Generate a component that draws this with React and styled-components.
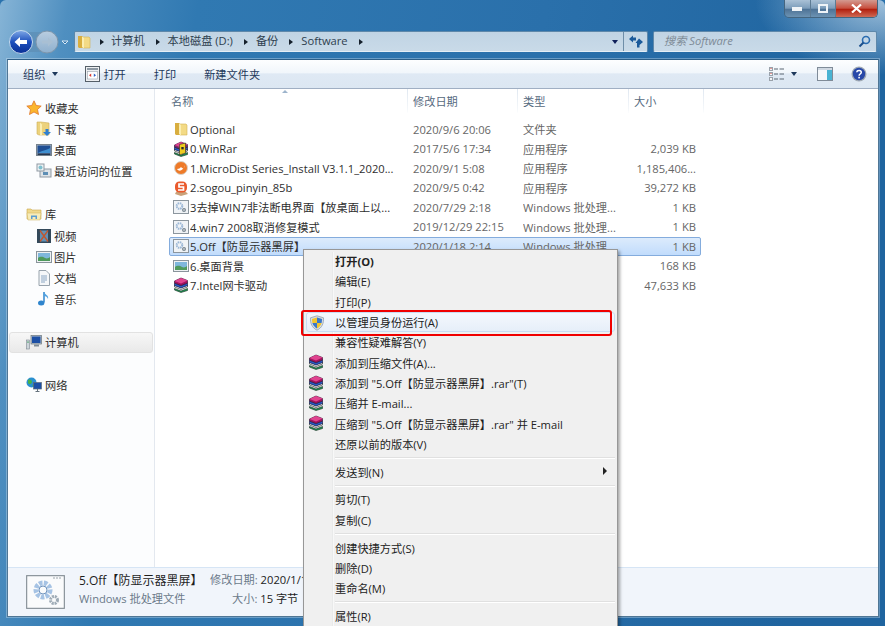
import React from 'react';
import styled, { createGlobalStyle } from 'styled-components';

const GlobalStyle = createGlobalStyle`
    html, body { margin: 0; padding: 0; background: #2a72ad; }
    body { font-family: "Open Sans", "Noto Sans CJK SC", sans-serif; font-size: 11.2px; overflow: hidden; }
    * { box-sizing: border-box; }
`

const Window = styled.div`
    position: relative;
    width: 885px;
    height: 626px;
    overflow: hidden;
    display: flex;
    flex-direction: column;
    padding: 0 6px 9px 6px;
    border-radius: 6px 6px 0 0;
    background:
        radial-gradient(ellipse 130px 75px at 885px 0, rgba(195, 218, 236, .8), rgba(195, 218, 236, 0)),
        linear-gradient(100deg, #86b4d6 0, #4f8fc0 7%, #3079b2 20%, #2a70ab 55%, #1f649f 90%);
`
const TitleBar = styled.div`
    height: 31px;
    display: flex;
    justify-content: flex-end;
    padding-right: 1px;
`
const Controls = styled.div`
    width: 94px;
    height: 18px;
    display: flex;
    border: 1px solid #44657f;
    border-top: 0;
    border-radius: 0 0 5px 5px;
    overflow: hidden;
`
const CtrlButton = styled.div`
    flex: ${props => props.$wide ? 1.65 : 1};
    display: flex;
    align-items: center;
    justify-content: center;
    border-right: 1px solid #5d7b94;
    background: ${props => props.$close
        ? 'linear-gradient(#d39a90, #c8503f 48%, #b2200f 55%, #cf6a55)'
        : 'linear-gradient(#a9c1d6, #7c9dbb 48%, #4e7396 55%, #6d93b3)'};
    &:last-child { border-right: 0; }
`
const NavBar = styled.div`
    height: 28px;
    display: flex;
    align-items: flex-start;
    padding-left: 3px;
`
const NavButtons = styled.div`
    width: 65px;
    height: 24px;
    flex: none;
    margin-top: -2px;
`
const AddressBox = styled.div`
    width: 574px;
    height: 21px;
    flex: none;
    display: flex;
    align-items: center;
    background: linear-gradient(#c0d4e4, #c9dae8);
    border: 1px solid #5e88aa;
    border-bottom-color: #e4eef5;
    border-radius: 2px;
    color: #2d3e4e;
    padding-left: 1px;
`
const Crumb = styled.span`
    margin: 0 11px 0 ${props => props.$first ? 7 : 8}px;
    padding-bottom: 3px;
    white-space: nowrap;
`
const CrumbArrow = styled.span`
    width: 0;
    height: 0;
    flex: none;
    margin-left: ${props => props.$first ? '8px' : '0'};
    border-left: 4px solid #15202b;
    border-top: 3.5px solid transparent;
    border-bottom: 3.5px solid transparent;
`
const AddressEnd = styled.div`
    margin-left: auto;
    height: 100%;
    display: flex;
    align-items: center;
`
const DropCaret = styled.span`
    width: 0;
    height: 0;
    margin: 0 ${props => props.$margin || 4}px 0 ${props => props.$margin || 4}px;
    border-top: 4px solid ${props => props.$color || '#10205a'};
    border-left: 3.5px solid transparent;
    border-right: 3.5px solid transparent;
`
const RefreshBox = styled.div`
    width: 24px;
    height: 100%;
    display: flex;
    align-items: center;
    justify-content: center;
    border-left: 1px solid #6f8ea8;
`
const SearchBox = styled.div`
    width: 224px;
    height: 21px;
    flex: none;
    margin-left: 5px;
    display: flex;
    align-items: center;
    justify-content: space-between;
    padding: 0 5px 0 10px;
    background: linear-gradient(#c0d4e4, #c9dae8);
    border: 1px solid #5e88aa;
    border-bottom-color: #e4eef5;
    border-radius: 2px;
    color: #7e8b96;
    font-style: italic;
`
const SearchText = styled.span`
    padding-bottom: 3px;
`
const Body = styled.div`
    flex: 1;
    min-height: 0;
    display: flex;
    flex-direction: column;
    background: #fff;
    border: 1px solid #4f7695;
    border-top-color: #2d5f88;
    margin: 0 0 0 1px;
    box-shadow: 0 0 0 1px rgba(220, 235, 245, .35);
`
const Toolbar = styled.div`
    height: 29px;
    flex: none;
    display: flex;
    align-items: center;
    padding: 0 11px 0 15px;
    color: #1e395b;
    background: linear-gradient(#fdfeff 0, #f1f6fb 45%, #dfe9f4 50%, #dce7f2 100%);
    border-bottom: 1px solid #a0afc3;
`
const ToolItem = styled.div`
    display: flex;
    align-items: center;
    gap: 3px;
    margin-left: ${props => props.$left || 0}px;
    padding-bottom: 1px;
    white-space: nowrap;
`
const ToolRight = styled.div`
    margin-left: auto;
    display: flex;
    align-items: center;
`
const Content = styled.div`
    flex: 1;
    min-height: 0;
    display: flex;
`
const Sidebar = styled.div`
    width: 147px;
    flex: none;
    padding: 8px 0 0 1px;
    border-right: 1px solid #e3e8ef;
    background: #fcfdfe;
`
const NavGroup = styled.div`
    margin-bottom: 22px;
`
const NavRow = styled.div`
    height: 21.2px;
    display: flex;
    align-items: center;
    gap: ${props => props.$child ? 2 : 3}px;
    color: #2b2b2b;
    padding-left: ${props => props.$child ? 27 : 17}px;
    ${props => props.$active && `
        margin-right: 1px;
        border: 1px solid #e2e2e2;
        border-radius: 3px;
        padding-left: 16px;
        background: linear-gradient(#f7f7f7, #e9e9e9);
    `}
`
const FileArea = styled.div`
    flex: 1;
    min-width: 0;
    background: #fff;
`
const HeaderRow = styled.div`
    height: 24px;
    display: grid;
    grid-template-columns: 253px 110px 111px 75px;
    position: relative;
    color: #566a80;
`
const HeaderCell = styled.div`
    display: flex;
    align-items: center;
    padding-left: ${props => props.$pad || 5}px;
    padding-bottom: 1px;
    border-right: 1px solid;
    border-image: linear-gradient(#dfe7f0, #f4f7fa 80%, #fff) 1;
`
const SortMark = styled.span`
    position: absolute;
    left: 127px;
    top: 1px;
    width: 0;
    height: 0;
    border-bottom: 3px solid #9db4cc;
    border-left: 3px solid transparent;
    border-right: 3px solid transparent;
`
const FileList = styled.div`
    padding: 6.5px 0 0 14px;
    width: 546px;
`
const FileRow = styled.div`
    height: 19.5px;
    display: grid;
    grid-template-columns: 17px 223px 110px 97px 1fr;
    align-items: center;
    padding: 0 4px 0 3px;
    color: #666;
    border: 1px solid transparent;
    border-radius: 2px;
    ${props => props.$selected && `
        border-color: #84acdd;
        background: linear-gradient(#dcebfc, #c1dcfc);
    `}
`
const FileIcon = styled.div`
    display: flex;
    height: 16px;
`
const FileName = styled.div`
    color: #2e2e2e;
    white-space: nowrap;
    overflow: hidden;
`
const FileCell = styled.div`
    white-space: nowrap;
    overflow: hidden;
    text-align: ${props => props.$right ? 'right' : 'left'};
`
const Details = styled.div`
    height: 49px;
    flex: none;
    display: flex;
    align-items: flex-start;
    padding: 7px 0 0 18px;
    background: #f1f5fb;
    border-top: 1px solid #d6e5f5;
`
const DetailText = styled.div`
    margin: -4px 0 0 14px;
    display: grid;
    grid-template-columns: 131px auto;
    row-gap: 1px;
    color: #666;
    white-space: nowrap;
`
const DetailName = styled.div`
    color: #1e1e1e;
    font-size: 12px;
`
const DetailMeta = styled.div`
    padding-left: ${props => props.$pad || 0}px;
    color: #6b7a8a;
    & > b { font-weight: 400; color: #222; }
`
const Menu = styled.div`
    position: absolute;
    left: 303px;
    top: 249px;
    width: 315px;
    height: 400px;
    padding: 1px 2px 2px;
    background: #f0f0f0;
    border: 1px solid #979797;
    box-shadow: 2px 2px 3px rgba(0, 0, 0, .35);
    color: #222;
    &::before {
        content: "";
        position: absolute;
        left: 28px;
        top: 2px;
        bottom: 0;
        width: 2px;
        background: linear-gradient(90deg, #e2e3e3, #fff);
    }
`
const MenuRow = styled.div`
    position: relative;
    height: 20.3px;
    display: flex;
    align-items: center;
    padding-left: 29px;
    font-weight: ${props => props.$bold ? 700 : 400};
    white-space: nowrap;
    ${props => props.$hot && `
        border: 1px solid #c9dcf2;
        border-radius: 3px;
        padding-left: 28px;
        background: linear-gradient(#f4f8fd, #e6eff9);
    `}
`
const MenuIcon = styled.span`
    position: absolute;
    left: 2px;
    top: 2px;
    width: 16px;
    height: 16px;
    display: flex;
`
const MenuArrow = styled.span`
    position: absolute;
    right: 8px;
    top: 6px;
    width: 0;
    height: 0;
    border-left: 4px solid #222;
    border-top: 4px solid transparent;
    border-bottom: 4px solid transparent;
`
const MenuSep = styled.div`
    height: 7.5px;
    margin-left: 29px;
    display: flex;
    align-items: center;
    &::after {
        content: "";
        width: 100%;
        height: 2px;
        background: linear-gradient(#e0e0e0 50%, #fff 50%);
    }
`
const RedMark = styled.div`
    position: absolute;
    left: -3px;
    top: 60px;
    width: 311px;
    height: 26px;
    border: 2.5px solid #f00000;
    border-radius: 3px;
`

const FolderIcon = () => (
    <svg width="16" height="16" viewBox="0 0 16 16">
        <path d="M2 2h4l1 1v11H3l-1-1z" fill="#d9ae3f" />
        <path d="M6 3l7 0 1 1v10H7z" fill="#f3da85" stroke="#d5b455" strokeWidth=".6" />
        <path d="M6 2.500l2 1.500v10.500L6 13z" fill="#fbeeb2" />
    </svg>
);
const BatchIcon = () => (
    <svg width="16" height="16" viewBox="0 0 16 16">
        <rect x=".5" y="1.500" width="15" height="13" fill="#f0f3f6" stroke="#8c969e" />
        <circle cx="6.500" cy="7" r="2.800" fill="none" stroke="#9bb7d6" strokeWidth="2" strokeDasharray="1.500 .7" />
        <circle cx="11" cy="11" r="1.400" fill="none" stroke="#77858f" strokeWidth="1.200" />
    </svg>
);
const RarSlabs = ({ top }) => (
    <>
        <path d="M1.500 11.500L8 14l6.500-2.500v2L8 15.500l-6.500-2.500z" fill="#1e9a58" stroke="#16261c" strokeWidth=".6" />
        <path d="M1.500 8L8 10.500 14.500 8v2L8 12.500 1.500 10z" fill="#f4f4f4" stroke="#1c1c1c" strokeWidth=".6" />
        <path d="M1.500 6L8 8.500 14.500 6v2.500L8 11 1.500 8.500z" fill="#2a58c4" stroke="#10183a" strokeWidth=".6" />
        <path d="M1.500 4L8 1l6.500 2.500v2.500L8 8.500 1.500 6z" fill={top} stroke="#2a1230" strokeWidth=".6" />
        <path d="M8 1L1.500 4 8 6.500l6.500-3z" fill="#e0438f" />
    </>
);
const RarIcon = () => (
    <svg width="16" height="16" viewBox="0 0 16 16">
        <RarSlabs top="#a3115f" />
    </svg>
);
const WinRarIcon = () => (
    <svg width="16" height="16" viewBox="0 0 16 16">
        <RarSlabs top="#7e2a6a" />
        <path d="M6.500 3.500l6-1.500v10l-6 2z" fill="#eecb1f" stroke="#2b2b2b" strokeWidth=".6" />
        <rect x="8.300" y="6" width="2.400" height="2.400" fill="#2b2b2b" />
    </svg>
);
const MicroIcon = () => (
    <svg width="16" height="16" viewBox="0 0 16 16">
        <circle cx="8" cy="8" r="6.500" fill="#ee7a28" stroke="#d9d3c9" />
        <path d="M4 9c2 3 6 2 8-4-1 5-3 3-4 2-1 1-2 2-4 2z" fill="#fff" />
    </svg>
);
const SogouIcon = () => (
    <svg width="16" height="16" viewBox="0 0 16 16">
        <path d="M3 12h10l2 2-7 2-6-2z" fill="#c9a27a" />
        <rect x="2" y="1.500" width="12" height="11" rx="4.500" fill="#ea5a2c" />
        <path d="M11 4H6v3h4.500v3H5" fill="none" stroke="#fff" strokeWidth="1.700" />
    </svg>
);
const PictureIcon = ({ size = 16 }) => (
    <svg width={size} height={size} viewBox="0 0 16 16">
        <rect x=".5" y="2.500" width="15" height="11" fill="#eef1f3" stroke="#8a949c" />
        <rect x="2" y="4" width="12" height="8" fill="#7fb7dc" />
        <path d="M2 12V9c3-2 5-1 7 0s4 0 5-1v4z" fill="#4f9a5c" />
    </svg>
);
const StarIcon = () => (
    <svg width="16" height="16" viewBox="0 0 16 16">
        <path d="M8 .8l2.200 4.700 5 .6-3.700 3.400 1 5L8 12l-4.500 2.500 1-5L.8 6.100l5-.6z" fill="#fbb62e" stroke="#e0762a" strokeWidth=".8" />
    </svg>
);
const DownloadIcon = () => (
    <svg width="16" height="16" viewBox="0 0 16 16">
        <path d="M1 1h4l8 1v12H3l-2-1z" fill="#ecd27c" stroke="#cfae55" strokeWidth=".6" />
        <path d="M4 1.500l2 2V14H4z" fill="#fbeeb2" />
        <path d="M9.500 8h3v3H15l-4 4-4-4h2.500z" fill="#2f7fd0" />
    </svg>
);
const DesktopIcon = () => (
    <svg width="16" height="16" viewBox="0 0 16 16">
        <rect x=".5" y="2.500" width="15" height="11" fill="#aeb9c4" stroke="#77838e" />
        <rect x="1.500" y="3.500" width="13" height="8" fill="#1f4f94" />
        <path d="M2 11c5-3 9-3 12-5v5z" fill="#3f8fd0" />
        <rect x="1.500" y="11.500" width="13" height="1.500" fill="#24364e" />
    </svg>
);
const RecentIcon = () => (
    <svg width="16" height="16" viewBox="0 0 16 16">
        <rect x="4" y="6" width="11" height="8" fill="#dfe4e8" stroke="#8f9aa3" />
        <rect x="1" y="1" width="7" height="7" fill="#eef2f4" stroke="#8f9aa3" />
        <circle cx="4.500" cy="4.500" r="2" fill="#7fc0cf" />
        <rect x="7" y="9" width="5" height="3" fill="#5e8fb5" />
    </svg>
);
const LibraryIcon = () => (
    <svg width="16" height="16" viewBox="0 0 16 16">
        <path d="M1 3h4l1 1h9v9H1z" fill="#f0d98c" stroke="#c9a94f" strokeWidth=".6" />
        <path d="M1 7h14l-1 7H2z" fill="#f8ecb8" stroke="#cfb25c" strokeWidth=".5" />
        <path d="M5 13V9.500h6V13h-1.500v-2h-3v2z" fill="#5c9dd0" />
    </svg>
);
const VideoIcon = () => (
    <svg width="16" height="16" viewBox="0 0 16 16">
        <rect x="1" y="1" width="14" height="14" fill="#33495a" />
        <rect x="4" y="2.500" width="8" height="11" fill="#5f92b8" />
        <path d="M4 2.500l8 11M12 2.500l-8 11" stroke="#c2552c" strokeWidth="1.300" />
    </svg>
);
const DocIcon = () => (
    <svg width="16" height="16" viewBox="0 0 16 16">
        <path d="M3 .5h7l3.500 3.500v11.500H3z" fill="#f5f7f9" stroke="#98a3ad" />
        <path d="M5 6h6M5 8h6M5 10h6M5 12h4" stroke="#8ba7c4" />
    </svg>
);
const MusicIcon = () => (
    <svg width="16" height="16" viewBox="0 0 16 16">
        <path d="M8 1v10.500" stroke="#2f85cd" strokeWidth="1.500" />
        <path d="M8 1c1 3 5 3 4 7-.6-2-2-3-4-3z" fill="#4fa0df" />
        <ellipse cx="5.200" cy="12" rx="3.200" ry="2.500" fill="#2f85cd" />
    </svg>
);
const ComputerIcon = () => (
    <svg width="16" height="16" viewBox="0 0 16 16">
        <rect x="5" y="1.500" width="10.500" height="8.500" fill="#b7c2cc" stroke="#66727d" strokeWidth=".7" />
        <rect x="6" y="2.500" width="8.500" height="6.500" fill="#1c4fa5" />
        <path d="M8 10.500h5v2H8z" fill="#7f8b96" />
        <rect x=".5" y="6" width="3" height="9" fill="#cdd5da" stroke="#7d8891" strokeWidth=".6" />
        <rect x="1.300" y="7.500" width="1.400" height="1.200" fill="#43a060" />
    </svg>
);
const NetworkIcon = () => (
    <svg width="16" height="16" viewBox="0 0 16 16">
        <circle cx="5.500" cy="5.500" r="5" fill="#2a8fd0" />
        <path d="M2 3c2-1 4 0 4 2s-3 3-4 1zM7 7c2 0 2 2 1 3-1 0-2-1-1-3z" fill="#46b04a" />
        <rect x="7.500" y="5.500" width="8" height="6.500" fill="#1c4fa5" stroke="#5e6d7b" strokeWidth=".7" />
        <path d="M11.500 12v2.500M9.500 14.500h4" stroke="#66727d" />
    </svg>
);
const ShieldIcon = () => (
    <svg width="16" height="16" viewBox="0 0 16 16">
        <path d="M8 .8l6.500 2c.4 5.500-1.500 10-6.500 12.400C3 12.800 1.100 8.300 1.500 2.800z" fill="#d6dce2" stroke="#8b98a5" strokeWidth=".7" />
        <path d="M8 2.500l5 1.500c0 1.300-.1 2.600-.4 4H8z" fill="#3b78c8" />
        <path d="M8 2.500L3 4c0 1.300.1 2.600.4 4H8z" fill="#f2c52c" />
        <path d="M8 8h4.600c-.7 2.300-2.200 4.200-4.600 5.500z" fill="#f2c52c" />
        <path d="M8 8H3.400c.7 2.300 2.200 4.200 4.600 5.500z" fill="#3b78c8" />
    </svg>
);
const OpenIcon = () => (
    <svg width="15" height="16" viewBox="0 0 15 16">
        <rect x=".5" y=".5" width="14" height="15" fill="#eef0f2" stroke="#555f68" />
        <rect x="2" y="2" width="11" height="2" fill="#8d99a4" />
        <rect x="2.500" y="5.500" width="10" height="7.500" fill="#fff" stroke="#9aa4ad" strokeWidth=".6" />
        <path d="M4 9.200l2.200-1.700v3.400z" fill="#d6342b" />
        <path d="M11 9.200L8.800 7.500v3.400z" fill="#2f62c8" />
    </svg>
);
const ViewIcon = () => (
    <svg width="16" height="14" viewBox="0 0 16 14">
        <rect x=".5" y=".5" width="3" height="3" fill="#f3f5f8" stroke="#9aa2ab" />
        <rect x=".5" y="5.500" width="3" height="3" fill="#f3f5f8" stroke="#9aa2ab" />
        <rect x=".5" y="10.500" width="3" height="3" fill="#f3f5f8" stroke="#9aa2ab" />
        <path d="M1.500 1.500h1M1.500 6.500h1" stroke="#d8433a" />
        <path d="M5 2h4M10.500 2H15M5 7h4M10.500 7H15M5 12h4M10.500 12H15" stroke="#5b6673" />
    </svg>
);
const PaneIcon = () => (
    <svg width="16" height="14" viewBox="0 0 16 14">
        <rect x=".5" y=".5" width="15" height="13" fill="#f4f7fa" stroke="#7f8b98" />
        <rect x="10" y="1" width="5" height="12" fill="#49b3d2" />
        <rect x="1" y="1" width="14" height="2" fill="#cfd8e2" />
    </svg>
);
const HelpIcon = () => (
    <svg width="16" height="16" viewBox="0 0 16 16">
        <circle cx="8" cy="8" r="7.500" fill="#9fa9b4" />
        <circle cx="8" cy="8" r="6.200" fill="#2848a8" />
        <path d="M5.800 6.200C6 3.800 10.300 3.800 10.300 6.300c0 1.700-2.200 1.700-2.200 3.400" fill="none" stroke="#fff" strokeWidth="1.500" />
        <rect x="7.300" y="10.800" width="1.600" height="1.600" fill="#fff" />
    </svg>
);
const SearchGlass = () => (
    <svg width="13" height="13" viewBox="0 0 13 13">
        <circle cx="8" cy="5" r="3.500" fill="none" stroke="#2a6cb0" strokeWidth="1.600" />
        <path d="M5.500 7.500L1.500 11.500" stroke="#1b4f8c" strokeWidth="2" />
    </svg>
);
const RefreshIcon = () => (
    <svg width="14" height="13" viewBox="0 0 14 13">
        <path d="M0 4l4-3.500v2h3v3H4v2z" fill="#1b5a9a" />
        <path d="M14 7l-3.500 3v-2V12.500H8V8H6.500L10 3.500z" fill="#1b5a9a" />
    </svg>
);
const NavCluster = () => (
    <svg width="65" height="26" viewBox="0 0 65 26">
        <defs>
            <linearGradient id="backFill" x1="0" y1="0" x2="0" y2="1">
                <stop offset="0" stopColor="#7fa8e6" />
                <stop offset=".5" stopColor="#1c4fbc" />
                <stop offset="1" stopColor="#0a2f94" />
            </linearGradient>
            <linearGradient id="fwdFill" x1="0" y1="0" x2="0" y2="1">
                <stop offset="0" stopColor="#b9cde0" />
                <stop offset="1" stopColor="#8fb0ce" />
            </linearGradient>
        </defs>
        <path d="M12 3h26v20H12z" fill="#5f92ba" />
        <circle cx="12" cy="13" r="11.500" fill="url(#backFill)" stroke="#c7dcee" />
        <path d="M5.500 13l5.500-5v3h7v4h-7v3z" fill="#fff" />
        <circle cx="38" cy="13" r="11" fill="url(#fwdFill)" stroke="#7d95ab" />
        <path d="M44 13l-5-4.500v3h-6v3h6v3z" fill="#a9bfd3" />
        <path d="M53 12h6l-3 3z" fill="#2a70ab" stroke="#d8e8f4" strokeWidth="1" />
    </svg>
);
const MinimizeGlyph = () => <svg width="10" height="5"><rect width="10" height="4" y="1" fill="#eef3f7" /></svg>;
const MaximizeGlyph = () => <svg width="10" height="9"><rect x="1" y="1" width="8" height="7" fill="none" stroke="#eef3f7" strokeWidth="2" /></svg>;
const CloseGlyph = () => <svg width="11" height="9"><path d="M1 .5l9 8M10 .5l-9 8" stroke="#fff" strokeWidth="2.200" /></svg>;
const BigBatchIcon = () => (
    <svg width="39" height="34" viewBox="0 0 39 34">
        <rect x=".5" y=".5" width="38" height="33" rx="1" fill="#fafbfc" stroke="#8e979e" strokeWidth="1.500" />
        <path d="M27 3h8" stroke="#9aa3aa" strokeDasharray="2 1" />
        <circle cx="17" cy="15" r="7" fill="none" stroke="#a6c3e4" strokeWidth="5" strokeDasharray="3.500 1.300" />
        <circle cx="17" cy="15" r="4" fill="none" stroke="#6f93bd" strokeWidth="1" />
        <circle cx="28" cy="25" r="3.500" fill="none" stroke="#9daab5" strokeWidth="3" strokeDasharray="2 .8" />
    </svg>
);

const files = [
    { icon: <FolderIcon />, name: 'Optional', date: '2020/9/6 20:06', type: '文件夹', size: '' },
    { icon: <WinRarIcon />, name: '0.WinRar', date: '2017/5/6 17:34', type: '应用程序', size: '2,039 KB' },
    { icon: <MicroIcon />, name: '1.MicroDist Series_Install V3.1.1_2020...', date: '2020/9/1 5:08', type: '应用程序', size: '1,185,406...' },
    { icon: <SogouIcon />, name: '2.sogou_pinyin_85b', date: '2020/9/5 0:42', type: '应用程序', size: '39,272 KB' },
    { icon: <BatchIcon />, name: '3去掉WIN7非法断电界面【放桌面上以...', date: '2020/7/29 2:18', type: 'Windows 批处理...', size: '1 KB' },
    { icon: <BatchIcon />, name: '4.win7 2008取消修复模式', date: '2019/12/29 22:15', type: 'Windows 批处理...', size: '1 KB' },
    { icon: <BatchIcon />, name: '5.Off【防显示器黑屏】', date: '2020/1/18 2:14', type: 'Windows 批处理...', size: '1 KB', selected: true },
    { icon: <PictureIcon />, name: '6.桌面背景', date: '2020/7/29 2:18', type: 'PNG 图像', size: '168 KB' },
    { icon: <RarIcon />, name: '7.Intel网卡驱动', date: '2020/7/29 2:18', type: '应用程序', size: '47,633 KB' },
];

const navGroups = [
    [
        { icon: <StarIcon />, label: '收藏夹' },
        { icon: <DownloadIcon />, label: '下载', child: true },
        { icon: <DesktopIcon />, label: '桌面', child: true },
        { icon: <RecentIcon />, label: '最近访问的位置', child: true },
    ],
    [
        { icon: <LibraryIcon />, label: '库' },
        { icon: <VideoIcon />, label: '视频', child: true },
        { icon: <PictureIcon />, label: '图片', child: true },
        { icon: <DocIcon />, label: '文档', child: true },
        { icon: <MusicIcon />, label: '音乐', child: true },
    ],
    [{ icon: <ComputerIcon />, label: '计算机', active: true }],
    [{ icon: <NetworkIcon />, label: '网络' }],
];

const menuItems = [
    { label: '打开(O)', bold: true },
    { label: '编辑(E)' },
    { label: '打印(P)' },
    { label: '以管理员身份运行(A)', shield: true, hot: true },
    { label: '兼容性疑难解答(Y)' },
    { label: '添加到压缩文件(A)...', rar: true },
    { label: '添加到 "5.Off【防显示器黑屏】.rar"(T)', rar: true },
    { label: '压缩并 E-mail...', rar: true },
    { label: '压缩到 "5.Off【防显示器黑屏】.rar" 并 E-mail', rar: true },
    { label: '还原以前的版本(V)' },
    { sep: true },
    { label: '发送到(N)', more: true },
    { sep: true },
    { label: '剪切(T)' },
    { label: '复制(C)' },
    { sep: true },
    { label: '创建快捷方式(S)' },
    { label: '删除(D)' },
    { label: '重命名(M)' },
    { sep: true },
    { label: '属性(R)' },
];

const App = () => {
    return (
        <Window>
            <GlobalStyle />
            <TitleBar>
                <Controls>
                    <CtrlButton><MinimizeGlyph /></CtrlButton>
                    <CtrlButton><MaximizeGlyph /></CtrlButton>
                    <CtrlButton $close $wide><CloseGlyph /></CtrlButton>
                </Controls>
            </TitleBar>
            <NavBar>
                <NavButtons><NavCluster /></NavButtons>
                <AddressBox>
                    <FolderIcon />
                    <CrumbArrow $first />
                    <Crumb $first>计算机</Crumb>
                    <CrumbArrow />
                    <Crumb>本地磁盘 (D:)</Crumb>
                    <CrumbArrow />
                    <Crumb>备份</Crumb>
                    <CrumbArrow />
                    <Crumb>Software</Crumb>
                    <CrumbArrow />
                    <AddressEnd>
                        <DropCaret $margin={5} />
                        <RefreshBox><RefreshIcon /></RefreshBox>
                    </AddressEnd>
                </AddressBox>
                <SearchBox>
                    <SearchText>搜索 Software</SearchText>
                    <SearchGlass />
                </SearchBox>
            </NavBar>
            <Body>
                <Toolbar>
                    <ToolItem>组织<DropCaret $color="#1e395b" /></ToolItem>
                    <ToolItem $left={23}><OpenIcon />打开</ToolItem>
                    <ToolItem $left={28}>打印</ToolItem>
                    <ToolItem $left={28}>新建文件夹</ToolItem>
                    <ToolRight>
                        <ViewIcon />
                        <DropCaret $color="#1e395b" $margin={6} />
                        <ToolItem $left={14}><PaneIcon /></ToolItem>
                        <ToolItem $left={18}><HelpIcon /></ToolItem>
                    </ToolRight>
                </Toolbar>
                <Content>
                    <Sidebar>
                        {navGroups.map((group, i) => (
                            <NavGroup key={i}>
                                {group.map(item => (
                                    <NavRow key={item.label} $child={item.child} $active={item.active}>
                                        {item.icon}{item.label}
                                    </NavRow>
                                ))}
                            </NavGroup>
                        ))}
                    </Sidebar>
                    <FileArea>
                        <HeaderRow>
                            <SortMark />
                            <HeaderCell $pad={16}>名称</HeaderCell>
                            <HeaderCell>修改日期</HeaderCell>
                            <HeaderCell>类型</HeaderCell>
                            <HeaderCell>大小</HeaderCell>
                        </HeaderRow>
                        <FileList>
                            {files.map(file => (
                                <FileRow key={file.name} $selected={file.selected}>
                                    <FileIcon>{file.icon}</FileIcon>
                                    <FileName>{file.name}</FileName>
                                    <FileCell>{file.date}</FileCell>
                                    <FileCell>{file.type}</FileCell>
                                    <FileCell $right>{file.size}</FileCell>
                                </FileRow>
                            ))}
                        </FileList>
                    </FileArea>
                </Content>
                <Details>
                    <BigBatchIcon />
                    <DetailText>
                        <DetailName>5.Off【防显示器黑屏】</DetailName>
                        <DetailMeta>修改日期: <b>2020/1/18 2:14</b></DetailMeta>
                        <DetailMeta>Windows 批处理文件</DetailMeta>
                        <DetailMeta $pad={22}>大小: <b>15 字节</b></DetailMeta>
                    </DetailText>
                </Details>
            </Body>
            <Menu>
                {menuItems.map((item, i) => item.sep ? <MenuSep key={i} /> : (
                    <MenuRow key={i} $bold={item.bold} $hot={item.hot}>
                        {item.shield && <MenuIcon><ShieldIcon /></MenuIcon>}
                        {item.rar && <MenuIcon><RarIcon /></MenuIcon>}
                        {item.label}
                        {item.more && <MenuArrow />}
                    </MenuRow>
                ))}
                <RedMark />
            </Menu>
        </Window>
    );
};

export default App;
